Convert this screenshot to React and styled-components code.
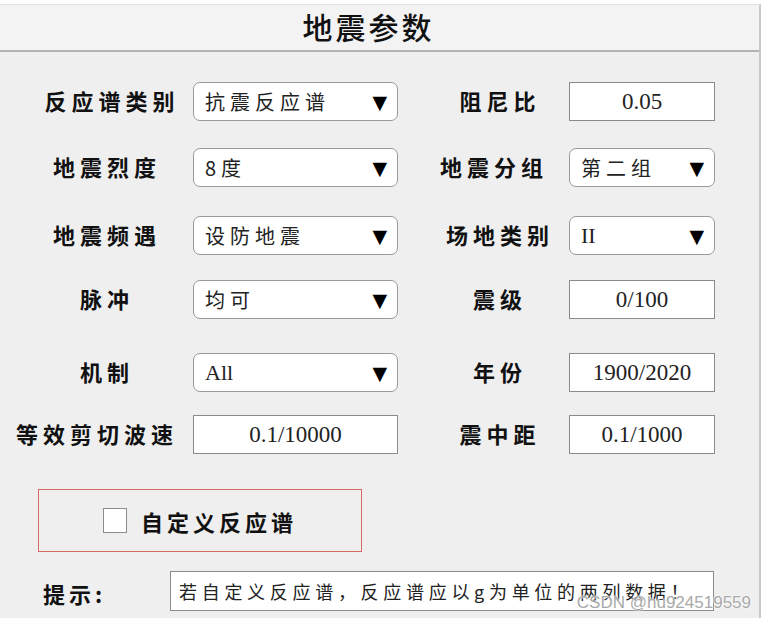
import React from 'react'
import styled, { createGlobalStyle } from 'styled-components'

const GlobalStyle = createGlobalStyle`
  html, body {
    margin: 0;
    padding: 0;
    background: #ffffff;
  }
  body {
    font-family: "Noto Sans CJK SC", "Noto Sans", sans-serif;
    color: #111;
  }
`

const Panel = styled.div`
  position: relative;
  width: 761px;
  height: 614px;
  margin-top: 4px;
  background: #efeff0;
  border-top: 1px solid #e2e2e2;
  border-right: 2px solid #c9c9c9;
  box-sizing: border-box;
`

const Header = styled.div`
  height: 47px;
  display: flex;
  align-items: center;
  justify-content: center;
  padding: 0 22px 4px 0;
  box-sizing: border-box;
  background: #f3f3f4;
  border-bottom: 2px solid #b4b4b4;
`

const Title = styled.h1`
  margin: 0;
  font-size: 30px;
  font-weight: 500;
  letter-spacing: 3px;
  color: #111;
`

const Form = styled.div`
  padding: 0 0 0 16px;
`

const Row = styled.div`
  display: grid;
  grid-template-columns: 177px 205px 171px 146px;
  align-items: center;
  height: 39px;
  margin-top: ${p => p.$top}px;
`

const Label = styled.div`
  font-size: 22px;
  font-weight: 700;
  letter-spacing: 5px;
  line-height: 1;
  text-align: center;
  white-space: nowrap;
  padding-left: ${p => (p.$pad || 0) + 5}px;
  margin-top: -3px;
  transform: translateX(${p => p.$shift || 0}px);
`

const Select = styled.div`
  height: 39px;
  box-sizing: border-box;
  display: flex;
  align-items: center;
  justify-content: space-between;
  padding: 0 10px 0 11px;
  background: #ffffff;
  border: 1px solid #9a9a9a;
  border-radius: 7px;
  font-size: ${p => (p.$latin ? 22 : 20)}px;
  letter-spacing: ${p => (p.$latin ? 0 : 5)}px;
  color: #222;
  font-family: ${p => (p.$latin ? '"Liberation Serif", serif' : '"Noto Sans CJK SC", sans-serif')};
`

const Arrow = styled.span`
  font-family: "DejaVu Sans", sans-serif;
  font-size: 19px;
  letter-spacing: 0;
  color: #000;
`

const Input = styled.div`
  height: 39px;
  box-sizing: border-box;
  display: flex;
  align-items: center;
  justify-content: center;
  background: #ffffff;
  border: 1px solid #8a8a8a;
  font-family: "Liberation Serif", serif;
  font-size: 23px;
  color: #222;
`

const CustomBox = styled.div`
  width: 324px;
  height: 63px;
  box-sizing: border-box;
  margin: 35px 0 0 38px;
  border: 1px solid #d86a64;
  display: flex;
  align-items: center;
  justify-content: center;
  gap: 14px;
`

const Check = styled.span`
  width: 24px;
  height: 25px;
  box-sizing: border-box;
  background: #fff;
  border: 1px solid #8c8c8c;
`

const CheckText = styled.span`
  font-size: 22px;
  font-weight: 700;
  letter-spacing: 4px;
`

const TipRow = styled.div`
  display: flex;
  align-items: center;
  margin-top: 19px;
  padding-left: 43px;
`

const TipLabel = styled.div`
  width: 127px;
  font-size: 22px;
  font-weight: 700;
  letter-spacing: 4px;
  padding-top: 4px;
`

const TipBox = styled.div`
  width: 544px;
  height: 40px;
  box-sizing: border-box;
  display: flex;
  align-items: center;
  padding-left: 8px;
  background: #fff;
  border: 1px solid #8a8a8a;
  font-size: 18px;
  letter-spacing: 4.7px;
  color: #222;
  white-space: nowrap;
  overflow: hidden;
`

const Watermark = styled.div`
  position: absolute;
  right: 8px;
  bottom: 5px;
  font-family: "Liberation Sans", sans-serif;
  font-size: 17px;
  color: #a9a9a9;
  text-shadow: 0 0 2px #fff, 0 0 2px #fff;
`

const rows = [
  { top: 30, l: '反应谱类别', ls: 5, c: '抗震反应谱', r: '阻尼比', v: '0.05' },
  { top: 27, l: '地震烈度', c: '8度', r: '地震分组', rs: '第二组', rsh: -6 },
  { top: 29, l: '地震频遇', c: '设防地震', r: '场地类别', rs: 'II', rl: true },
  { top: 25, l: '脉冲', c: '均可', r: '震级', v: '0/100' },
  { top: 34, l: '机制', c: 'All', cl: true, r: '年份', v: '1900/2020' },
  { top: 23, l: '等效剪切波速', ls: -10, ci: '0.1/10000', r: '震中距', v: '0.1/1000' },
]

const Dropdown = ({ text, latin }) => (
  <Select $latin={latin}>
    <span>{text}</span>
    <Arrow>▼</Arrow>
  </Select>
)

export default function App() {
  return (
    <>
      <GlobalStyle />
      <Panel>
        <Header>
          <Title>地震参数</Title>
        </Header>
        <Form>
          {rows.map(row => (
            <Row key={row.l} $top={row.top}>
              <Label $shift={row.ls}>{row.l}</Label>
              {row.ci ? <Input>{row.ci}</Input> : <Dropdown text={row.c} latin={row.cl} />}
              <Label $pad={28} $shift={row.rsh}>{row.r}</Label>
              {row.v ? <Input>{row.v}</Input> : <Dropdown text={row.rs} latin={row.rl} />}
            </Row>
          ))}
        </Form>
        <CustomBox>
          <Check />
          <CheckText>自定义反应谱</CheckText>
        </CustomBox>
        <TipRow>
          <TipLabel>提示:</TipLabel>
          <TipBox>若自定义反应谱，反应谱应以g为单位的两列数据！</TipBox>
        </TipRow>
        <Watermark>CSDN @hu924519559</Watermark>
      </Panel>
    </>
  )
}
